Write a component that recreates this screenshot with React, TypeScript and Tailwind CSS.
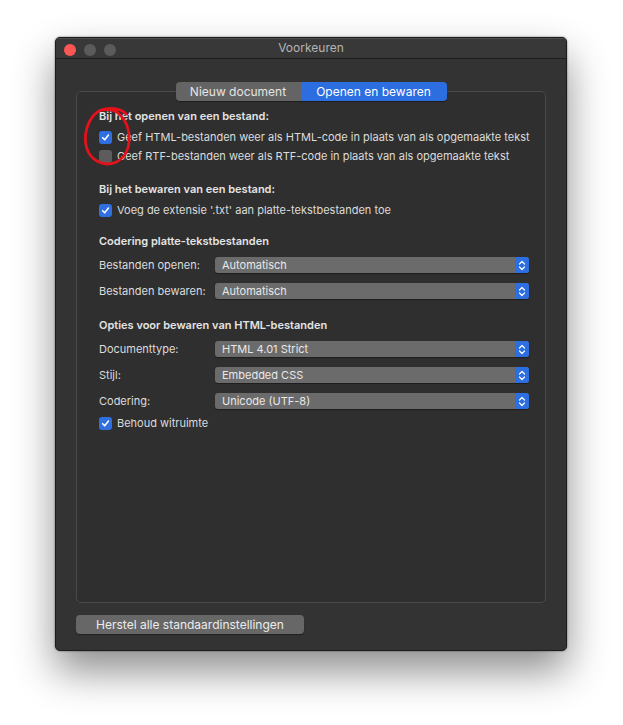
import { ReactNode } from "react"

const font = { fontFamily: "Inter, 'Noto Sans', sans-serif" }

const Checkbox = ({ checked }: { checked: boolean }) =>
  checked ? (
    <span className="flex h-[13px] w-[13px] shrink-0 items-center justify-center rounded-[3px] bg-[#2f6fe0]">
      <svg width="9" height="9" viewBox="0 0 10 10">
        <path d="M1.8 5.2 L4.1 7.6 L8.3 2.3" fill="none" stroke="white" strokeWidth="1.7" strokeLinecap="round" strokeLinejoin="round" />
      </svg>
    </span>
  ) : (
    <span className="h-[13px] w-[13px] shrink-0 rounded-[3px] bg-[#5c5c5c]" />
  )

const CheckRow = ({ checked, label }: { checked: boolean; label: string }) => (
  <div className="flex h-[19px] items-center gap-[5px] whitespace-nowrap">
    <Checkbox checked={checked} />
    <span className="text-[#dcdcdc]">{label}</span>
  </div>
)

const Heading = ({ children }: { children: ReactNode }) => (
  <div className="flex h-[22px] items-center whitespace-nowrap font-semibold text-[#e4e4e4]">{children}</div>
)

const Select = ({ label, value }: { label: string; value: string }) => (
  <div className="flex h-[26px] items-center whitespace-nowrap">
    <span className="w-[116px] text-[#dcdcdc]">{label}</span>
    <div className="flex h-[16px] flex-1 overflow-hidden rounded-[3px] bg-[#6b6b6b] shadow-[0_1px_1px_rgba(0,0,0,0.4)]">
      <span className="flex-1 pl-[7px] leading-[16px] text-[#e8e8e8]">{value}</span>
      <span className="flex w-[14px] items-center justify-center bg-[#2d6ee0]">
        <svg width="8" height="11" viewBox="0 0 8 11">
          <path d="M1.5 4 L4 1.5 L6.5 4 M1.5 7 L4 9.5 L6.5 7" fill="none" stroke="white" strokeWidth="1.2" strokeLinecap="round" strokeLinejoin="round" />
        </svg>
      </span>
    </div>
  </div>
)

export default function App() {
  return (
    <div className="h-[725px] w-[623px] bg-white pl-[55px] pt-[37px] text-[11px]" style={font}>
      <div className="relative flex h-[614px] w-[512px] flex-col overflow-hidden rounded-[5px] border border-[#1c1c1c] bg-[#333333] shadow-[0_20px_40px_rgba(0,0,0,0.45),0_0_2px_rgba(0,0,0,0.6)]">
        <div className="relative flex h-[22px] items-center justify-center border-b border-[#1e1e1e] bg-[#383838] shadow-[inset_0_1px_0_#4c4c4c]">
          <div className="absolute left-[8px] top-[6px] flex gap-[8px]">
            <span className="h-[12px] w-[12px] rounded-full bg-[#fc5753]" />
            <span className="h-[12px] w-[12px] rounded-full bg-[#5b5b5b]" />
            <span className="h-[12px] w-[12px] rounded-full bg-[#5b5b5b]" />
          </div>
          <span className="text-[12px] text-[#b4b4b4]">Voorkeuren</span>
        </div>

        <div className="flex flex-1 flex-col px-[20px] pb-[16px] pt-[23px]">
          <div className="relative z-10 mx-auto flex h-[19px] overflow-hidden rounded-[4px] text-[12px] shadow-[0_1px_1px_rgba(0,0,0,0.4)]">
            <span className="flex w-[125px] items-center justify-center bg-[#646464] text-[#e4e4e4]">Nieuw document</span>
            <span className="flex w-[146px] items-center justify-center bg-[#2c6de0] text-white">Openen en bewaren</span>
          </div>

          <div className="-mt-[10px] h-[512px] rounded-[5px] border border-[#4a4a4a] bg-[#2f2f2f] pl-[22px] pr-[16px] pt-[13px]">
            <div className="mb-[1px]">
              <Heading>Bij het openen van een bestand:</Heading>
            </div>
            <CheckRow checked label="Geef HTML-bestanden weer als HTML-code in plaats van als opgemaakte tekst" />
            <CheckRow checked={false} label="Geef RTF-bestanden weer als RTF-code in plaats van als opgemaakte tekst" />

            <div className="mt-[12px]">
              <div className="mb-[1px]">
                <Heading>Bij het bewaren van een bestand:</Heading>
              </div>
              <CheckRow checked label="Voeg de extensie '.txt' aan platte-tekstbestanden toe" />
            </div>

            <div className="mt-[10px]">
              <Heading>Codering platte-tekstbestanden</Heading>
              <Select label="Bestanden openen:" value="Automatisch" />
              <Select label="Bestanden bewaren:" value="Automatisch" />
            </div>

            <div className="mt-[10px]">
              <Heading>Opties voor bewaren van HTML-bestanden</Heading>
              <Select label="Documenttype:" value="HTML 4.01 Strict" />
              <Select label="Stijl:" value="Embedded CSS" />
              <Select label="Codering:" value="Unicode (UTF-8)" />
              <CheckRow checked label="Behoud witruimte" />
            </div>
          </div>

          <button className="mt-[12px] h-[19px] w-[228px] rounded-[4px] bg-[#676767] text-[12px] text-[#ececec] shadow-[0_1px_1px_rgba(0,0,0,0.4)]">
            Herstel alle standaardinstellingen
          </button>
        </div>

        <svg className="pointer-events-none absolute left-0 top-0" width="512" height="614" viewBox="55 37 512 614">
          <path
            d="M125 113 C119 106 102 105 94 113 C86 121 83 134 85 144 C87 155 95 162 106 163 C118 163 127 154 128 141 C129 129 125 119 117 112 C112 108 107 108 102 109"
            fill="none"
            stroke="#e5121c"
            strokeWidth="2.8"
            strokeLinecap="round"
          />
        </svg>
      </div>
    </div>
  )
}
